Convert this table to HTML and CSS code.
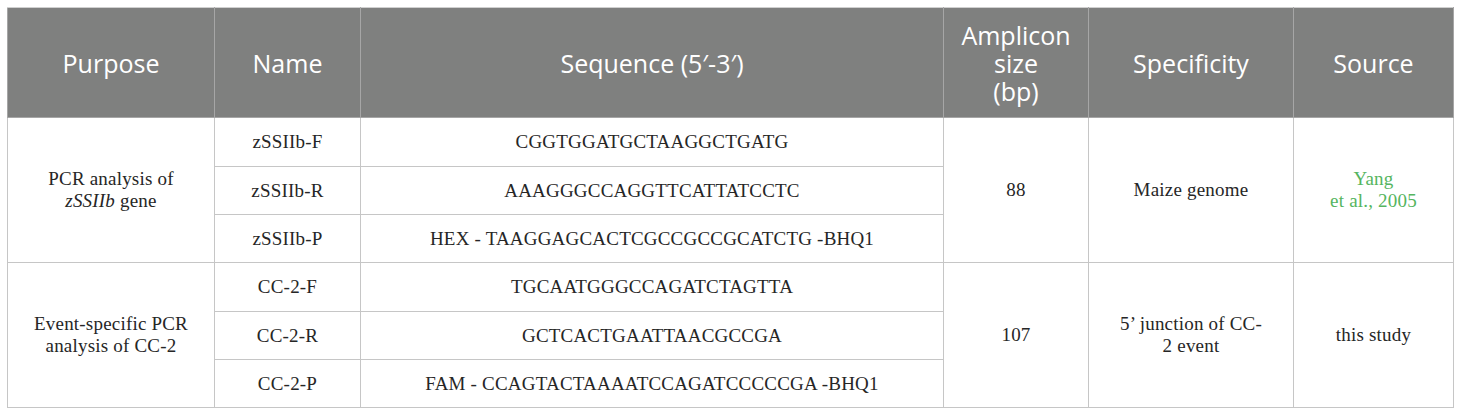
FILE: index.html
```html
<!DOCTYPE html>
<html>
<head>
<meta charset="utf-8">
<link rel="stylesheet" href="styles.css">
</head>
<body>
<div class="wrap">
<table class="primers">
  <colgroup>
    <col class="c1"><col class="c2"><col class="c3"><col class="c4"><col class="c5"><col class="c6">
  </colgroup>
  <thead>
    <tr>
      <th>Purpose</th>
      <th>Name</th>
      <th>Sequence (5′-3′)</th>
      <th>Amplicon<br>size<br>(bp)</th>
      <th>Specificity</th>
      <th>Source</th>
    </tr>
  </thead>
  <tbody>
    <tr class="ra">
      <td rowspan="3">PCR analysis of<br><i>zSSIIb</i> gene</td>
      <td>zSSIIb-F</td>
      <td>CGGTGGATGCTAAGGCTGATG</td>
      <td rowspan="3">88</td>
      <td rowspan="3">Maize genome</td>
      <td rowspan="3"><span class="link">Yang<br>et al., 2005</span></td>
    </tr>
    <tr class="rb">
      <td>zSSIIb-R</td>
      <td>AAAGGGCCAGGTTCATTATCCTC</td>
    </tr>
    <tr class="rb">
      <td>zSSIIb-P</td>
      <td>HEX - TAAGGAGCACTCGCCGCCGCATCTG -BHQ1</td>
    </tr>
    <tr class="ra">
      <td rowspan="3">Event-specific PCR<br>analysis of CC-2</td>
      <td>CC-2-F</td>
      <td>TGCAATGGGCCAGATCTAGTTA</td>
      <td rowspan="3">107</td>
      <td rowspan="3">5’ junction of CC-<br>2 event</td>
      <td rowspan="3">this study</td>
    </tr>
    <tr class="rb">
      <td>CC-2-R</td>
      <td>GCTCACTGAATTAACGCCGA</td>
    </tr>
    <tr class="rb">
      <td>CC-2-P</td>
      <td>FAM - CCAGTACTAAAATCCAGATCCCCCGA -BHQ1</td>
    </tr>
  </tbody>
</table>
</div>
</body>
</html>
```

FILE: styles.css
```css
html, body {
  margin: 0;
  padding: 0;
  background: #ffffff;
}

.wrap {
  padding: 7px 7px;
}

.primers {
  border-collapse: collapse;
  table-layout: fixed;
  width: 1446px;
}

.c1 { width: 207px; }
.c2 { width: 146px; }
.c3 { width: 583px; }
.c4 { width: 145px; }
.c5 { width: 205px; }
.c6 { width: 160px; }

.primers th {
  background: #7f807f;
  color: #ffffff;
  font-family: "Open Sans", "Noto Sans", sans-serif;
  font-weight: 400;
  font-size: 25px;
  line-height: 28px;
  height: 109px;
  padding: 0 4px;
  text-align: center;
  vertical-align: middle;
  border: 1px solid #a6a6a6;
  border-top-color: #d0d0d0;
}

.primers td {
  font-family: "Liberation Serif", "Times New Roman", serif;
  font-size: 19px;
  letter-spacing: 0.2px;
  line-height: 22px;
  color: #262626;
  text-align: center;
  vertical-align: middle;
  border: 1px solid #c6c6c6;
  padding: 0 4px;
}

.primers tr.ra td { height: 48px; }
.primers tr.rb td { height: 47px; }

.link {
  color: #55b560;
}
```
